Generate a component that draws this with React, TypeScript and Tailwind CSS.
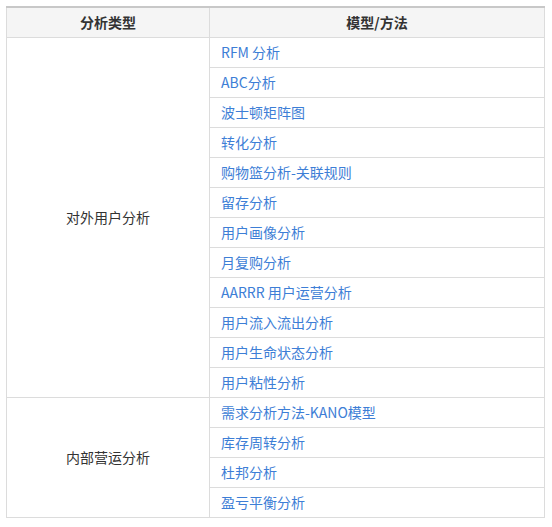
import React from "react";

const rows1 = [
  "RFM 分析",
  "ABC分析",
  "波士顿矩阵图",
  "转化分析",
  "购物篮分析-关联规则",
  "留存分析",
  "用户画像分析",
  "月复购分析",
  "AARRR 用户运营分析",
  "用户流入流出分析",
  "用户生命状态分析",
  "用户粘性分析",
];
const rows2 = ["需求分析方法-KANO模型", "库存周转分析", "杜邦分析", "盈亏平衡分析"];

export default function App() {
  const font = { fontFamily: '"Noto Sans CJK SC", "Noto Sans", sans-serif' };
  return (
    <div className="w-[552px] h-[527px] bg-white pt-[6px] pl-[6px]" style={font}>
      <table className="w-[539px] border-collapse text-[14px] table-fixed border-t-2 border-t-[#c8c8c8]">
        <colgroup>
          <col className="w-[203px]" />
          <col />
        </colgroup>
        <thead>
          <tr className="h-[30px] bg-[#f5f5f5]">
            <th className="border border-[#dcdcdc] border-t-0 font-bold text-[#333] text-center p-0">分析类型</th>
            <th className="border border-[#dcdcdc] border-t-0 font-bold text-[#333] text-center p-0">模型/方法</th>
          </tr>
        </thead>
        <tbody>
          {rows1.map((r, i) => (
            <tr key={r} className="h-[30px]">
              {i === 0 && (
                <td rowSpan={rows1.length} className="border border-[#dcdcdc] text-center text-[#333] p-0">
                  对外用户分析
                </td>
              )}
              <td className="border border-[#dcdcdc] px-[11px] py-0 text-[#3d7ed6]">{r}</td>
            </tr>
          ))}
          {rows2.map((r, i) => (
            <tr key={r} className="h-[30px]">
              {i === 0 && (
                <td rowSpan={rows2.length} className="border border-[#dcdcdc] text-center text-[#333] p-0">
                  内部营运分析
                </td>
              )}
              <td className="border border-[#dcdcdc] px-[11px] py-0 text-[#3d7ed6]">{r}</td>
            </tr>
          ))}
        </tbody>
      </table>
    </div>
  );
}
